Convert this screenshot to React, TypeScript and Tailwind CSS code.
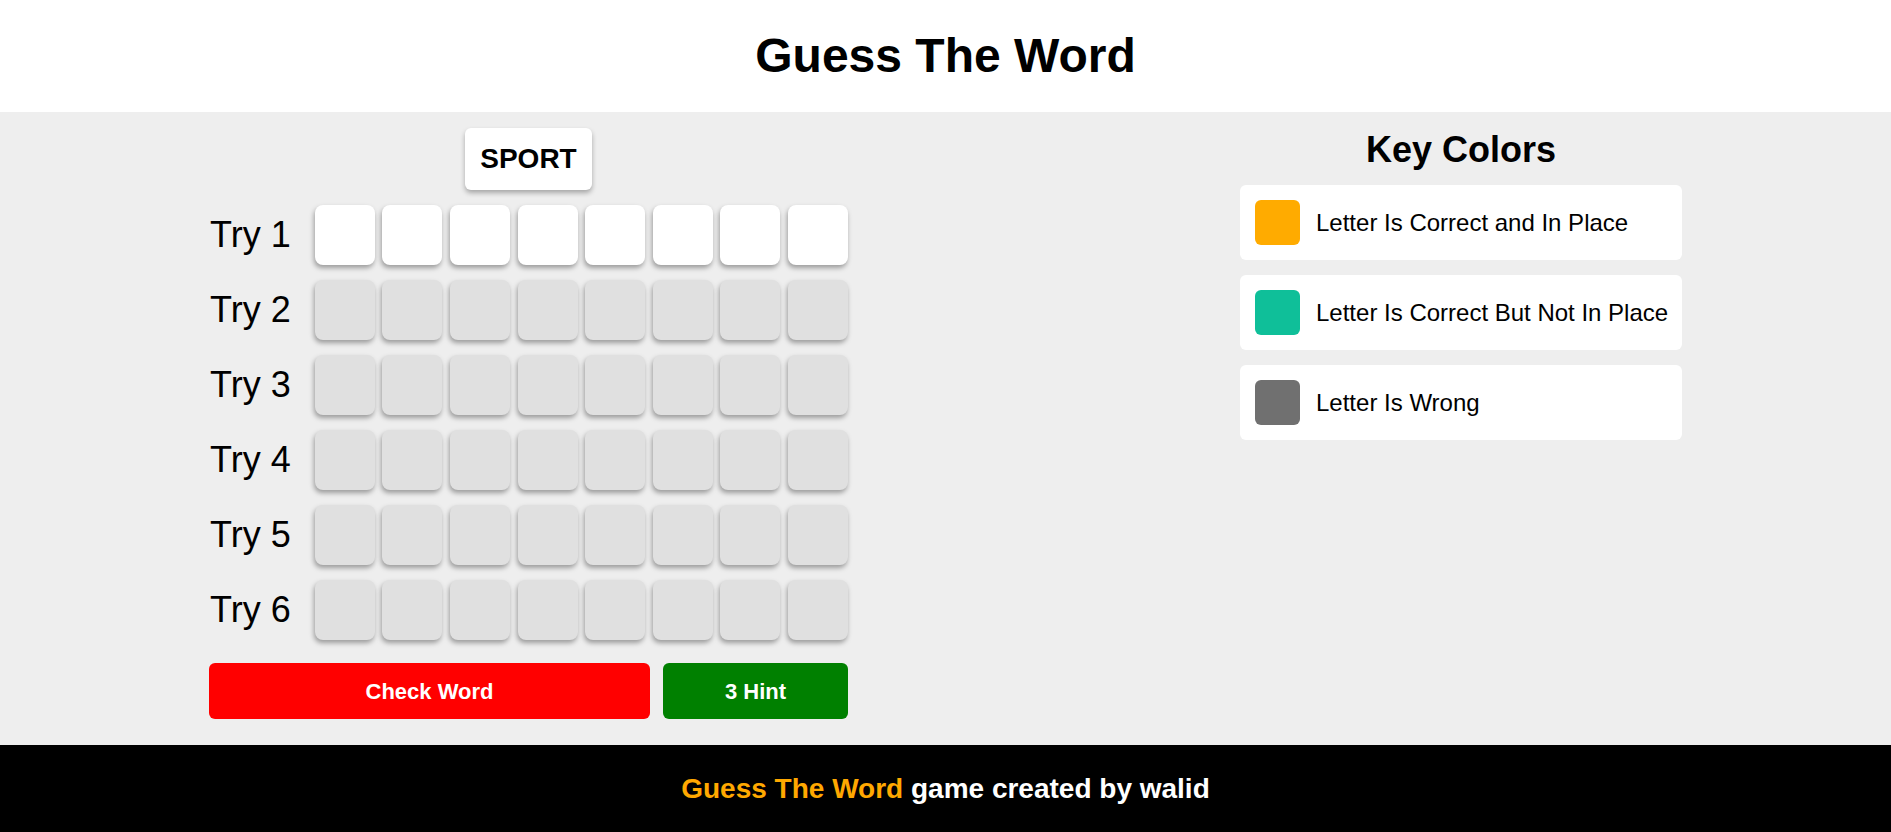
import React from "react"

// ─────────────────────────────────────────────────────────────
// Data
// ─────────────────────────────────────────────────────────────

const TRIES = [1, 2, 3, 4, 5, 6]
const LETTERS = 8

const KEYS: { color: string; label: string }[] = [
  { color: "bg-[#ffab00]", label: "Letter Is Correct and In Place" },
  { color: "bg-[#0fbf99]", label: "Letter Is Correct But Not In Place" },
  { color: "bg-[#707070]", label: "Letter Is Wrong" },
]

// ─────────────────────────────────────────────────────────────
// Try row
// ─────────────────────────────────────────────────────────────

function TryRow({ n, active }: { n: number; active: boolean }) {
  return (
    <div className="flex items-center">
      <span className="w-[106px] pl-[1px] text-[36px] leading-none text-black">Try {n}</span>
      <div className="flex gap-[7.6px]">
        {Array.from({ length: LETTERS }).map((_, i) => (
          <div
            key={i}
            className={
              active
                ? "h-[60px] w-[60px] rounded-[8px] bg-white shadow-[-1px_3px_5px_rgba(0,0,0,0.35)]"
                : "h-[60px] w-[60px] rounded-[8px] bg-[#e0e0e0] shadow-[-1px_3px_5px_rgba(0,0,0,0.35)]"
            }
          />
        ))}
      </div>
    </div>
  )
}

// ─────────────────────────────────────────────────────────────
// App
// ─────────────────────────────────────────────────────────────

export default function App() {
  return (
    <div className="min-h-screen bg-[#eeeeee] font-['Liberation_Sans',Arial,sans-serif] text-black">
      {/* ── Header ── */}
      <header className="flex h-[112px] items-center justify-center bg-white">
        <h1 className="text-[48px] font-bold leading-none">Guess The Word</h1>
      </header>

      {/* ── Game ── */}
      <main className="h-[633px] bg-[#eeeeee] pt-[16px]">
        <div className="mx-auto flex w-[1473px] justify-between">
          {/* Left: board */}
          <div className="flex w-[639px] flex-col items-center">
            <div className="flex h-[62px] items-center rounded-[6px] bg-white px-[15px] text-[28px] font-bold shadow-[0_3px_5px_rgba(0,0,0,0.3)]">
              SPORT
            </div>
            <div className="mt-[15px] flex w-full flex-col gap-[15px]">
              {TRIES.map((n) => (
                <TryRow key={n} n={n} active={n === 1} />
              ))}
            </div>
            <div className="mt-[23px] flex w-full gap-[13px]">
              <button
                type="button"
                className="h-[56px] w-[441px] rounded-[6px] bg-[#ff0000] text-[22px] font-bold text-white"
              >
                Check Word
              </button>
              <button
                type="button"
                className="h-[56px] flex-1 rounded-[6px] bg-[#008000] text-[22px] font-bold text-white"
              >
                3 Hint
              </button>
            </div>
          </div>

          {/* Right: key colors */}
          <div className="w-[442px] pt-[1px]">
            <h2 className="text-center text-[36px] font-bold leading-[41px]">Key Colors</h2>
            <div className="mt-[15px] flex flex-col gap-[15px]">
              {KEYS.map((k) => (
                <div
                  key={k.label}
                  className="flex h-[75px] items-center gap-[16px] rounded-[6px] bg-white px-[15px]"
                >
                  <div className={`h-[45px] w-[45px] shrink-0 rounded-[6px] ${k.color}`} />
                  <span className="whitespace-nowrap text-[24px] leading-none">{k.label}</span>
                </div>
              ))}
            </div>
          </div>
        </div>
      </main>

      {/* ── Footer ── */}
      <footer className="flex h-[87px] items-center justify-center bg-black text-[28px] font-bold text-white">
        <span className="text-[#ffa800]">Guess The Word</span>
        <span>&nbsp;game created by walid</span>
      </footer>
    </div>
  )
}
